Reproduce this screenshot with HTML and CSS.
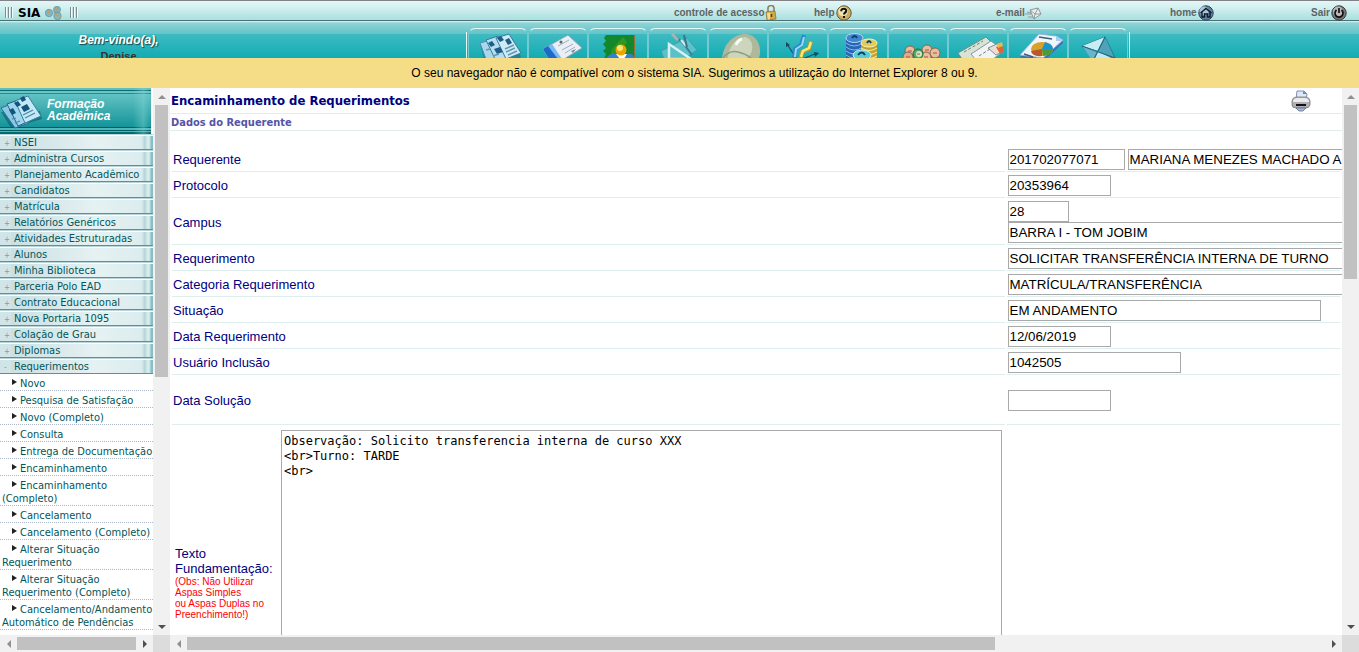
FILE: index.html
```html
<!DOCTYPE html>
<html lang="pt-BR">
<head>
<meta charset="utf-8">
<title>SIA</title>
<link rel="stylesheet" href="styles.css">
</head>
<body>
<header class="topbar">
  <div class="brand">
    <span class="grip"></span>
    <strong class="brand-name">SIA</strong>
    <svg class="brand-icon" width="18" height="14" viewBox="0 0 18 14"><g stroke="#5e929e" stroke-width=".7"><circle cx="4" cy="7" r="3.7" fill="#7db9c6"/><circle cx="12" cy="3.8" r="3.5" fill="#74b4c3"/><circle cx="12.5" cy="10" r="3.7" fill="#7ebccb"/></g><path d="M1 5l3-1 1 2-2 2zM5 9l2-1-1 2zM9 3l2-2 2 1-2 3zM13 5l2-2v3zM10 9l3-2 1 3-2 1zM14 12l2-3v2zM8 6l2 1-1 1z" fill="#c99c60"/></svg>
    <span class="grip"></span>
  </div>
  <nav class="quick">
    <a href="#">controle de acesso<svg width="12" height="16" viewBox="0 0 12 16"><path d="M3 8V4a3 3 0 0 1 6-1v4" fill="none" stroke="#8b8460" stroke-width="1.6"/><path d="M1 7l9-1 1 8-9 1z" fill="#d3a94b" stroke="#8a6724" stroke-width=".7"/><path d="M2 8l3-.4v6.8l-2.200.2z" fill="#f2dc94"/><path d="M6.500 9v3" stroke="#554018" stroke-width="1.500"/></svg></a>
    <a href="#">help<svg width="17" height="16" viewBox="0 0 17 16"><circle cx="9" cy="8" r="7.200" fill="#c7ae62" stroke="#645832"/><circle cx="8" cy="6.500" r="4.800" fill="#f0e3ae"/><path d="M6.200 6.200C6 2.800 11.600 3 11.200 6c-.2 1.600-2.200 1.700-2.200 3.400M9 11v2" fill="none" stroke="#111" stroke-width="2"/></svg></a>
    <a href="#">e-mail<svg width="17" height="14" viewBox="0 0 17 14"><path d="M5 4l8-2 3 6-7 5z" fill="#edf0f1" stroke="#858d90" stroke-width=".9"/><path d="M5 4l5 4 3-6M9 13l1-5 6 0M2 6l4 1M0 8h6M3 11l5 0" fill="none" stroke="#8b9395" stroke-width=".9"/></svg></a>
    <a href="#">home<svg width="17" height="16" viewBox="0 0 17 16"><circle cx="9" cy="8" r="7.200" fill="#5e84a8" stroke="#2c3f50"/><circle cx="7" cy="6" r="4.500" fill="#a8c5dc"/><path d="M3.500 8L9 3.500 14.500 8M5 7.500V12h2.500V9h3v3H13V7.500" fill="none" stroke="#111a22" stroke-width="1.400"/></svg></a>
    <a href="#">Sair<svg width="17" height="16" viewBox="0 0 17 16"><circle cx="9" cy="8" r="7.200" fill="#77777a" stroke="#3b3b3b"/><circle cx="8" cy="6.500" r="5" fill="#b9b9bb"/><path d="M6.500 5a4 4 0 1 0 5 0M9 3v5" fill="none" stroke="#111" stroke-width="1.700"/></svg></a>
  </nav>
</header>

<div class="ribbon">
  <div class="welcome"><em>Bem-vindo(a),</em><span>Denise</span></div>
  <nav class="tabs">
    <a href="#" aria-label="Acadêmico"><svg viewBox="0 0 60 30"><path d="M11 15l4 15h36l1-3-20-20z" fill="#2c6f91" opacity=".7"/><path d="M11 14l11-3 11 19H17z" fill="#a9d8ec" stroke="#4d91b1"/><path d="M17 11l12-4 14 23H26z" fill="#b5dff1" stroke="#367c9e"/><path d="M27 9l13-4 12 19-15 6z" fill="#cdeaf5" stroke="#397a9b"/><path d="M19 14l4-2 3 4-4 2zM28 9l4-2 3 4-4 2zM36 11l4-2 3 5-4 2zM25 20l6-2 3 5-6 2z" fill="#205c87"/><path d="M17 21l4-1M36 20l9-4M37 23l9-4M39 26l9-4M24 27l6-2" stroke="#6298b4" stroke-width="1.500"/></svg></a>
    <a href="#" aria-label="Certificados"><svg viewBox="0 0 60 30"><path d="M14 20L39 6l14 13-18 11H20z" fill="#e9eff5" stroke="#89a5b1"/><path d="M14 20l7-4 9 14H20z" fill="#1b6acb"/><path d="M19 17l4-2 10 15h-4z" fill="#79baf4"/><path d="M29 17l11-6M33 21l11-6M36 24l10-6" stroke="#9fb1bd" stroke-width="1"/><circle cx="32" cy="13" r="1.500" fill="#567"/><path d="M42 22l5-2-3 4z" fill="#789"/></svg></a>
    <a href="#" aria-label="Professores"><svg viewBox="0 0 60 30"><path d="M17 6h29v24H15l2-5-3-3 3-3-3-4 3-3-2-3z" fill="#13872b"/><path d="M45 6h1v24h-1z" fill="#956f37"/><path d="M23 20L34 8l4 5-10 17h-8z" fill="#3c9f1c" opacity=".7"/><path d="M17 30q3-6 10-5h11q7-1 7 5z" fill="#337fd2"/><path d="M27 25l4 5h4l3-5z" fill="#fff"/><circle cx="32" cy="21" r="5.500" fill="#e9a600"/><circle cx="31" cy="19" r="3" fill="#ffe26e"/></svg></a>
    <a href="#" aria-label="Projetos"><svg viewBox="0 0 60 30"><path d="M12 22L38 9l10 12-13 9H15z" fill="#76c8d2" opacity=".7" stroke="#4699a4"/><path d="M20 15l0 15h22z" fill="none" stroke="#d5f2f5" stroke-width="2.500"/><path d="M24 6q8 5 13 12l6 8" fill="none" stroke="#397e94" stroke-width="2"/><path d="M23 5l6 6" stroke="#a8b4ae" stroke-width="3"/><path d="M32 11l5 6" stroke="#c9f0f3" stroke-width="2"/><path d="M35 6l3 12" stroke="#3d7384" stroke-width="2"/></svg></a>
    <a href="#" aria-label="Engenharia"><svg viewBox="0 0 60 30"><path d="M13 30C14 15 25 4 38 5c12 2 15 16 12 24l-2 1z" fill="#aeb89b"/><path d="M19 30C19 19 26 9 36 8c8 2 9 12 5 18l-4 4z" fill="#cdd5bd"/><path d="M14 29q6-8 15-6t14 7" fill="none" stroke="#8d9d84" stroke-width="1.500"/><path d="M27 16q2-5 6-6" stroke="#f8fbf2" stroke-width="3" fill="none"/></svg></a>
    <a href="#" aria-label="Indicadores"><svg viewBox="0 0 60 30"><path d="M18 15l11 17 19-8" fill="none" stroke="#17566d" stroke-width="1.300"/><path d="M17 18v-5l4 3zM45 23l5 1-4 4z" fill="#174a60"/><path d="M25 30l1-10 6-4 3-10" fill="none" stroke="#2d87ce" stroke-width="4"/><path d="M26 28l1-8 6-4 2-8" fill="none" stroke="#9ed6f5" stroke-width="2"/><path d="M31 30l2-7 7-3 2-8" fill="none" stroke="#bb9a29" stroke-width="4"/><path d="M32 28l2-6 6-3 2-6" fill="none" stroke="#ffe772" stroke-width="2.500"/></svg></a>
    <a href="#" aria-label="Financeiro"><svg viewBox="0 0 60 30"><path d="M17 9h17v21H17z" fill="#2867b7"/><path d="M17 14q8 6 17 0M17 18q8 6 17 0M17 22q8 6 17 0M17 26q8 6 17 0" stroke="#82bce8" fill="none"/><ellipse cx="25.500" cy="9" rx="8.500" ry="4.500" fill="#3e86cf" stroke="#b3dcf7"/><path d="M32 15h16v15H32z" fill="#bfa336"/><path d="M32 19q8 5 16 0M32 23q8 5 16 0M32 27q8 5 16 0" stroke="#fff08c" fill="none"/><ellipse cx="40" cy="14" rx="8" ry="4" fill="#e3ca5c" stroke="#fff3a8"/><ellipse cx="33" cy="26" rx="9" ry="5" fill="#56ced3" stroke="#c9f8f8"/><path d="M23 9q3-4 5 0M38 14q2-4 4 0M29 26q4-5 7 0" stroke="#123d70" stroke-width="2" fill="none"/></svg></a>
    <a href="#" aria-label="Pessoas"><svg viewBox="0 0 60 30"><g stroke="#8b624d" fill="#e6bf9d"><circle cx="21" cy="22" r="5"/><circle cx="38" cy="21" r="5"/><circle cx="46" cy="24" r="5"/><circle cx="19" cy="28" r="5" fill="#e0a88c"/><circle cx="37" cy="28" r="5"/></g><circle cx="29" cy="25" r="5" fill="#53a966" stroke="#236b3c"/><circle cx="30" cy="25" r="3" fill="#cde9c4"/><path d="M19 22h4M36 21h4M44 24h4M17 28h4M35 28h4M28 25h3" stroke="#b8503a" stroke-width="1.200"/></svg></a>
    <a href="#" aria-label="Pagamentos"><svg viewBox="0 0 60 30"><path d="M9 24L37 8l12 12-16 10H13z" fill="#d8e3d5" stroke="#718e86"/><path d="M22 25l20-13 13 10-11 8H26z" fill="#f1f3f5" stroke="#7f9ba3"/><path d="M39 19l11-5 5 8-8 4z" fill="#e9dfd5" stroke="#7f9198"/><path d="M47 18l6-2 2 6-4 3z" fill="#dd6535"/><path d="M48 15l5-2 1 4-5 2z" fill="#e9b74b"/><path d="M15 23l19-11M30 27l11-7" stroke="#6a817c" stroke-dasharray="3 2"/></svg></a>
    <a href="#" aria-label="Relatórios"><svg viewBox="0 0 60 30"><path d="M11 27L31 5l22 5 1 4-17 16H13z" fill="#3773bd"/><path d="M11 26L30 5l17 2 7 4-20 18z" fill="#eef5fb" stroke="#90b6de"/><path d="M47 7l0 5 7 0z" fill="#a8cdf0"/><ellipse cx="33" cy="20" rx="11" ry="7" fill="#d9a12a"/><path d="M33 20l3-7q8 2 8 7z" fill="#1795cc"/><path d="M33 20h11q-1 6-10 7z" fill="#4e9a3b"/><path d="M33 20l0 7q-10 1-11-5z" fill="#b8572b"/><path d="M30 8l13 2M15 25l9 3" stroke="#465b70" stroke-width="1.500"/></svg></a>
    <a href="#" aria-label="Mensagens"><svg viewBox="0 0 60 30"><path d="M13 17l23-9 10 21-2 1H23z" fill="#398da6" stroke="#216f8b"/><path d="M13 17l23-9-7 14z" fill="#c6edf4"/><path d="M29 22l7-14 10 22z" fill="#4fa3b9"/><path d="M13 17l16 5-4 8h-3z" fill="#68b5ca"/><path d="M25 30l4-8 15 8z" fill="#bfeaf3"/><path d="M13 17l33 12M36 8L25 30" stroke="#1c6a83" stroke-width="1.200"/></svg></a>
  </nav>
</div>

<p class="notice">O seu navegador não é compatível com o sistema SIA. Sugerimos a utilização do Internet Explorer 8 ou 9.</p>

<div class="frames">
  <aside class="frame frame-menu">
    <div class="view">
      <div class="menu-head">
        <svg width="42" height="38" viewBox="0 0 42 38"><path d="M1 19l10 16 31-9-2-8z" fill="#075b70" opacity=".6"/><path d="M1 15l13-5 15 20-14 5z" fill="#8cc8e4" stroke="#266e97"/><path d="M7 11l14-5 13 20-16 7z" fill="#9dd6ec" stroke="#1f6288"/><path d="M15 8l13-5 13 20-16 7z" fill="#c3e9f6" stroke="#397fa1"/><path d="M14 10l4-2 3 4-4 2zM20 5l4-2 2 4-4 2zM9 17l4-2 3 5-4 2zM21 14l6-3 3 5-6 3z" fill="#13557f"/><path d="M23 22l10-5M25 25l10-5M12 26l4-1M15 30l5-2" stroke="#4686a6" stroke-width="1.200"/></svg>
        <h2>Formação Acadêmica</h2>
      </div>
      <div class="menu">
        <button class="group"><i>+</i><span>NSEI</span></button>
        <button class="group"><i>+</i><span>Administra Cursos</span></button>
        <button class="group"><i>+</i><span>Planejamento Acadêmico</span></button>
        <button class="group"><i>+</i><span>Candidatos</span></button>
        <button class="group"><i>+</i><span>Matrícula</span></button>
        <button class="group"><i>+</i><span>Relatórios Genéricos</span></button>
        <button class="group"><i>+</i><span>Atividades Estruturadas</span></button>
        <button class="group"><i>+</i><span>Alunos</span></button>
        <button class="group"><i>+</i><span>Minha Biblioteca</span></button>
        <button class="group"><i>+</i><span>Parceria Polo EAD</span></button>
        <button class="group"><i>+</i><span>Contrato Educacional</span></button>
        <button class="group"><i>+</i><span>Nova Portaria 1095</span></button>
        <button class="group"><i>+</i><span>Colação de Grau</span></button>
        <button class="group"><i>+</i><span>Diplomas</span></button>
        <button class="group"><i>-</i><span>Requerimentos</span></button>
      </div>
      <nav class="submenu">
        <a href="#">Novo</a>
        <a href="#">Pesquisa de Satisfação</a>
        <a href="#">Novo (Completo)</a>
        <a href="#">Consulta</a>
        <a href="#">Entrega de Documentação</a>
        <a href="#">Encaminhamento</a>
        <a href="#">Encaminhamento (Completo)</a>
        <a href="#">Cancelamento</a>
        <a href="#">Cancelamento (Completo)</a>
        <a href="#">Alterar Situação Requerimento</a>
        <a href="#">Alterar Situação Requerimento (Completo)</a>
        <a href="#">Cancelamento/Andamento Automático de Pendências</a>
      </nav>
    </div>
    <div class="bar bar-v menu-v"><b class="up off"></b><span class="track"><span class="thumb"></span></span><b class="down"></b></div>
    <div class="bar bar-h menu-h"><b class="left off"></b><span class="track"><span class="thumb"></span></span><b class="right"></b></div>
    <div class="corner"></div>
  </aside>

  <main class="frame frame-main">
    <div class="view">
      <div class="page-head">
        <h1>Encaminhamento de Requerimentos</h1>
        <button class="print" aria-label="Imprimir"><svg width="20" height="22" viewBox="0 0 20 22"><path d="M5 10L6 1h7l3 3-1 7z" fill="#dfe9fa" stroke="#8090a9"/><path d="M12 1v3h4z" fill="#6586bd"/><path d="M1 11q0-3 4-4h10q4 1 4 4v4q-1 3-4 3H5q-4 0-4-3z" fill="#b0b0b4" stroke="#77777c" stroke-width=".8"/><path d="M2 11q1-3 4-3h8q3 0 4 3v1H2z" fill="#ececee"/><path d="M5 14h10v2H5z" fill="#111"/><path d="M5 18h10l-3 3H8z" fill="#a8b6d9" stroke="#626e8b" stroke-width=".8"/></svg></button>
      </div>
      <h2 class="section">Dados do Requerente</h2>
      <form>
        <table class="form">
          <tr><th><label for="req">Requerente</label></th><td><input id="req" class="w-code" value="201702077071"> <input class="w-full" aria-label="Nome do requerente" value="MARIANA MENEZES MACHADO ALVES"></td></tr>
          <tr><th><label for="prot">Protocolo</label></th><td><input id="prot" class="w-date" value="20353964"></td></tr>
          <tr><th><label for="campus">Campus</label></th><td><input id="campus" class="w-short stacked" value="28"><input class="w-full stacked" aria-label="Nome do campus" value="BARRA I - TOM JOBIM"></td></tr>
          <tr><th><label for="tipo">Requerimento</label></th><td><input id="tipo" class="w-full" value="SOLICITAR TRANSFERÊNCIA INTERNA DE TURNO"></td></tr>
          <tr><th><label for="cat">Categoria Requerimento</label></th><td><input id="cat" class="w-full" value="MATRÍCULA/TRANSFERÊNCIA"></td></tr>
          <tr><th><label for="sit">Situação</label></th><td><input id="sit" class="w-status" value="EM ANDAMENTO"></td></tr>
          <tr><th><label for="data">Data Requerimento</label></th><td><input id="data" class="w-date" value="12/06/2019"></td></tr>
          <tr><th><label for="usu">Usuário Inclusão</label></th><td><input id="usu" class="w-user" value="1042505"></td></tr>
          <tr class="tall"><th><label for="sol">Data Solução</label></th><td><input id="sol" class="w-date" value=""></td></tr>
          <tr class="last"><th><div class="reason"><label for="texto">Texto Fundamentação: <small>(Obs: Não Utilizar Aspas Simples<br>ou Aspas Duplas no Preenchimento!)</small></label><textarea id="texto" rows="20">Observação: Solicito transferencia interna de curso XXX
&lt;br&gt;Turno: TARDE
&lt;br&gt;</textarea></div></th><td></td></tr>
        </table>
      </form>
    </div>
    <div class="bar bar-v main-v"><b class="up off"></b><span class="track"><span class="thumb"></span></span><b class="down"></b></div>
    <div class="bar bar-h main-h"><b class="left off"></b><span class="track"><span class="thumb"></span></span><b class="right"></b></div>
    <div class="corner"></div>
  </main>
</div>
</body>
</html>
```

FILE: styles.css
```css
* { box-sizing: border-box; }
html, body { height: 100%; }
body {
  margin: 0;
  display: flex;
  flex-direction: column;
  overflow: hidden;
  background: #fff;
  font-family: "Liberation Sans", Arial, sans-serif;
}
h1, h2, p { margin: 0; }
a { color: inherit; text-decoration: none; }
button { border: 0; padding: 0; background: none; font: inherit; }
svg { display: block; flex: none; }

/* top bar */
.topbar {
  flex: none;
  display: flex;
  align-items: center;
  justify-content: space-between;
  height: 21px;
  padding-top: 4px;
  border-top: 1px solid #808488;
  border-bottom: 1px solid #4a7274;
  background: linear-gradient(#e4f6f6, #d6f1f1 30%, #a8e0df);
}
.brand { display: flex; align-items: center; gap: 5px; padding-left: 5px; }
.brand-name { font: 900 12px "DejaVu Sans", sans-serif; line-height: 14px; color: #000; }
.grip {
  width: 8px;
  height: 11px;
  background: repeating-linear-gradient(90deg, #808b8d 0 1px, #f4fdfd 1px 2px, #c4e4e4 2px 3px);
}
.brand-icon + .grip { margin-left: 2px; }
.quick {
  width: 51%;
  display: grid;
  grid-template-columns: 140fr 182fr 174fr 141fr 48fr;
  padding-left: 8px;
  color: #5d6465;
  font-weight: bold;
  font-size: 10px;
  line-height: 16px;
}
.quick a { display: flex; align-items: center; white-space: nowrap; }

/* ribbon with tabs */
.ribbon {
  flex: none;
  display: flex;
  justify-content: space-between;
  height: 37px;
  overflow: hidden;
  background: linear-gradient(#e0f5f4 0, #8fd4d6 2px, #62c3c7 13px, #3ebbc1 13px, #14abb3 100%);
}
.welcome {
  width: 237px;
  display: flex;
  flex-direction: column;
  align-items: center;
  gap: 3px;
  padding-top: 12px;
  font-weight: bold;
}
.welcome em { color: #fff; font-size: 12px; line-height: 14px; text-shadow: 1px 1px 1px #15464a; }
.welcome span { color: #333; font-size: 11px; line-height: 13px; }
.tabs {
  display: flex;
  height: 30px;
  margin-top: 7px;
  margin-right: 229px;
  background:
    linear-gradient(#f0ffff, #d7f3f3) left bottom / 1px 26px no-repeat,
    linear-gradient(#f0ffff, #d7f3f3) right bottom / 1px 26px no-repeat;
  padding: 0 2px;
}
.tabs a {
  width: 60px;
  height: 40px;
  border: 1px solid #71cbd0;
  border-top-color: #e2fafa;
  border-radius: 7px 7px 0 0;
}
.tabs svg { width: 60px; height: 30px; }

.notice {
  flex: none;
  padding-left: 30px;
  background: #f5dc87;
  color: #000;
  font-size: 12px;
  line-height: 30px;
  text-align: center;
}

/* frames and their scroll bars */
.frames { flex: 1; min-height: 0; display: flex; }
.frame { display: grid; grid-template-rows: minmax(0, 1fr) 17px; min-width: 0; }
.frame-menu { flex: none; width: 170px; grid-template-columns: 153px 17px; }
.frame-main { flex: 1; grid-template-columns: minmax(0, 1fr) 17px; }
.view { overflow: hidden; }
.bar { display: flex; background: #f1f1f1; }
.bar-v { flex-direction: column; }
.bar b { flex: none; width: 17px; height: 17px; display: grid; place-items: center; }
.bar b::before { content: ""; border: 4px solid transparent; }
.bar .up::before { border-top: 0; border-bottom-color: #505050; }
.bar .down::before { border-bottom: 0; border-top-color: #505050; }
.bar .left::before { border-left: 0; border-right-color: #505050; }
.bar .right::before { border-right: 0; border-left-color: #505050; }
.bar .off::before { opacity: .6; }
.track { flex: 1; display: flex; min-height: 0; }
.bar-v .track { padding: 0 2px; }
.bar-h .track { padding: 2px 0; }
.thumb { width: 100%; background: #c1c1c1; }
.menu-v .thumb { height: 53%; }
.main-v .thumb { height: 34%; }
.main-h .thumb { width: 71%; }
.corner { background: #dcdcdc; }

/* side menu */
.menu-head {
  display: flex;
  align-items: center;
  gap: 5px;
  width: 151px;
  height: 46px;
  padding-top: 1px;
  background:
    linear-gradient(90deg, transparent 88%, #8ad8d866 95%, transparent),
    linear-gradient(#5bbfc0 0 2px, #0b6c72 2px 3px, #66c6c7 3px 5px, #218d92 5px 6px, #62c2c3 6px, #149499 39px, #005d63 39px 40px, #4eb8ba 40px 42px, #005d63 42px 43px, #4eb8ba 43px 44px, #006c72 44px);
}
.menu-head h2 { color: #fff; font-size: 12px; font-style: italic; line-height: 12px; padding-bottom: 3px; }
.menu, .submenu { font: 11px "DejaVu Sans Condensed", "DejaVu Sans", sans-serif; font-stretch: condensed; color: #00565b; }
.group {
  display: flex;
  width: 100%;
  height: 16px;
  padding: 2px 0 0;
  border-bottom: 1px solid #429da3;
  background: linear-gradient(#b8d6d9 0 1px, #fff 1px 2px, #d1e5e8 2px);
  color: inherit;
  line-height: 13px;
  text-align: left;
}
.group i { width: 11px; padding-left: 4px; color: #7fa0a6; font-style: normal; font-size: 8px; line-height: 15px; }
.group span {
  flex: 1;
  padding-left: 3px;
  white-space: nowrap;
  background: linear-gradient(90deg, #cae0e3, #e6f1f2 60%, #dcecee 92%, #b5d7db 94%, #e0f0f2 97%, #86bec4 99%);
}
.submenu a {
  display: block;
  padding: 3px 0 0 2px;
  border-bottom: 1px dotted #adb7c8;
  line-height: 13px;
  text-indent: 10px;
}
.submenu a::before {
  content: "";
  display: inline-block;
  margin-right: 3px;
  vertical-align: 2px;
  border: 3px solid transparent;
  border-left: 5px solid #222;
  border-right: 0;
}

/* form page */
.page-head {
  display: flex;
  justify-content: space-between;
  align-items: center;
  height: 26px;
  padding: 0 31px 0 1px;
  border-bottom: 1px solid #e0eeec;
}
.page-head h1 { font: bold 13px "DejaVu Sans Condensed", "DejaVu Sans", sans-serif; font-stretch: condensed; color: #000080; }
.section {
  padding: 1px 0 0 1px;
  border-bottom: 1px solid #e0eeec;
  font: bold 11px "DejaVu Sans Condensed", "DejaVu Sans", sans-serif;
  font-stretch: condensed;
  line-height: 15px;
  color: #5454a8;
}
.form {
  width: 100%;
  margin-top: 15px;
  border-spacing: 2px;
  table-layout: fixed;
  color: #000080;
  font-size: 13px;
}
.form th, .form td { height: 24px; padding: 1px; border-bottom: 1px solid #dcefee; }
.form th { width: 836px; width: 71.4%; font-weight: normal; text-align: left; }
.form td { white-space: nowrap; font-size: 11px; }
.form .tall th, .form .tall td { height: 48px; }
.form .last th, .form .last td { border: 0; padding: 3px; }
.form input {
  height: 21px;
  padding: 0 1px 1px;
  border: 1px solid #a9a9a9;
  vertical-align: top;
  background: #fff;
  color: #000;
  font-family: "Liberation Sans", Arial, sans-serif;
}
.form .tall input { vertical-align: middle; }
.form .stacked { display: block; }
.w-short { width: 61px; }
.w-date { width: 103px; }
.w-code { width: 117px; }
.w-user { width: 173px; }
.w-status { width: 313px; }
.w-full { width: 420px; }
.reason { display: flex; align-items: center; }
.reason label { flex: none; width: 106px; line-height: 15px; padding-right: 8px; }
.reason small { display: block; color: #f00; font-size: 10px; line-height: 11px; }
.reason textarea {
  flex: 1;
  display: block;
  padding: 3px 2px 1px;
  border: 1px solid #a9a9a9;
  resize: none;
  color: #000;
  font: 12px "DejaVu Sans Mono", monospace;
  line-height: 15px;
}
```
